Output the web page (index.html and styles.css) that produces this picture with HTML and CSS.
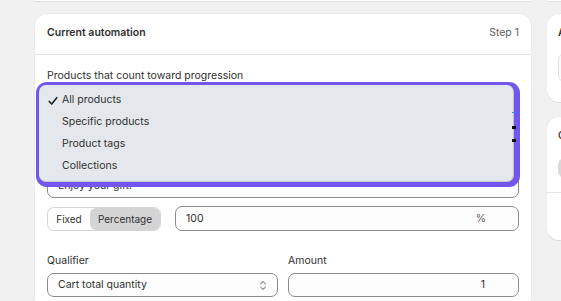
FILE: index.html
```html
<!DOCTYPE html>
<html lang="en">
  <head>
    <meta charset="UTF-8" />
    <meta name="viewport" content="width=device-width, initial-scale=1.0" />
    <title>Automation settings</title>
    <link rel="stylesheet" href="styles.css">
  </head>

  <body>
    <div class="page">
      <main class="col main-col">
        <div class="card stub"></div>

        <section class="card automation">
          <header class="card-head">
            <h2>Current automation</h2>
            <span class="step">Step 1</span>
          </header>

          <div class="card-body">
            <div class="field">
              <label>Products that count toward progression</label>
              <div class="control select"></div>
            </div>

            <div class="field gift">
              <div class="control">Enjoy your gift!</div>
            </div>

            <div class="row">
              <div class="segmented">
                <span class="seg-fixed">Fixed</span>
                <span class="seg-pct on">Percentage</span>
              </div>
              <div class="control grow">
                <span>100</span>
                <span class="suffix">%</span>
              </div>
            </div>

            <div class="grid2">
              <div class="field">
                <label>Qualifier</label>
                <div class="control select">
                  <span>Cart total quantity</span>
                  <svg class="updown" viewBox="0 0 10 14" width="8" height="11">
                    <path d="M2 5l3-3 3 3M2 9l3 3 3-3" fill="none" stroke="currentColor" stroke-width="1.3" stroke-linecap="round" stroke-linejoin="round" />
                  </svg>
                </div>
              </div>
              <div class="field">
                <label>Amount</label>
                <div class="control number">1</div>
              </div>
            </div>
          </div>

          <!-- open native picker, highlighted -->
          <div class="menu-ring">
            <ul class="menu">
              <li class="picked">
                <svg class="check" viewBox="0 0 12 12" width="10" height="10">
                  <path d="M1.5 6.5l3 3.2L10.5 2" fill="none" stroke="currentColor" stroke-width="1.8" stroke-linecap="round" stroke-linejoin="round" />
                </svg>
                All products
              </li>
              <li>Specific products</li>
              <li>Product tags</li>
              <li>Collections</li>
            </ul>
            <i class="tick blue"></i>
            <i class="tick dark one"></i>
            <i class="tick dark two"></i>
          </div>
        </section>
      </main>

      <aside class="col side-col">
        <div class="card stub"></div>

        <section class="card side-one">
          <h2>A</h2>
          <div class="preview-box"></div>
        </section>

        <section class="card side-two">
          <div class="side-inner">
            <h2>C</h2>
            <span class="grey-btn"></span>
          </div>
        </section>
      </aside>
    </div>
  </body>
</html>
```

FILE: styles.css
```css
* {
  margin: 0;
  padding: 0;
  box-sizing: border-box;
  font-family: Inter, "Liberation Sans", sans-serif;
}

body {
  background: #f1f1f1;
  color: #303030;
  font-size: 10.5px;
  line-height: 14px;
  overflow: hidden;
}

.page {
  display: flex;
  gap: 16px;
  padding-left: 35px;
}

.col {
  display: flex;
  flex-direction: column;
  flex-shrink: 0;
}

.main-col {
  width: 496px;
  gap: 13px;
}

.side-col {
  width: 14px;
  gap: 13px;
  overflow: hidden;
}

.card {
  background: #fff;
  border-radius: 12px;
  box-shadow: 0 1px 0 #dedede, 0 0 0 1px #ebebeb;
}

.side-col .card {
  width: 220px;
}

.stub {
  height: 1px;
  border-radius: 0 0 12px 12px;
}

.automation {
  position: relative;
}

.card-head {
  height: 41px;
  padding: 0 12px 2px;
  display: flex;
  justify-content: space-between;
  align-items: center;
  border-bottom: 1px solid #e6e6e6;
}

h2 {
  font-size: 10.5px;
  font-weight: 600;
  color: #303030;
}

.step {
  color: #616161;
}

.card-body {
  padding: 14px 12px 14px;
  display: flex;
  flex-direction: column;
}

.field {
  display: flex;
  flex-direction: column;
}

.field label {
  margin-bottom: 4px;
}

.gift {
  margin-top: 62px;
}

.control {
  height: 25px;
  border: 1px solid #8a8a8a;
  border-radius: 7px;
  padding: 0 10px;
  display: flex;
  align-items: center;
  justify-content: space-between;
  background: #fdfdfd;
}

.select {
  height: 24px;
  padding-right: 10px;
}

.updown {
  color: #8a8a8a;
}

.row {
  margin-top: 8px;
  display: flex;
  align-items: center;
  gap: 14px;
}

.grow {
  flex: 1;
  padding-right: 32px;
}

.suffix {
  color: #616161;
}

.segmented {
  display: flex;
  height: 24px;
  border: 1px solid #d4d4d4;
  border-radius: 7px;
  overflow: hidden;
  font-size: 10px;
}

.segmented span {
  display: flex;
  align-items: center;
  justify-content: center;
}

.seg-fixed {
  width: 42px;
}

.seg-pct {
  width: 70px;
}

.segmented .on {
  background: #d4d4d4;
  border-radius: 6px 0 0 6px;
}

.grid2 {
  margin-top: 23px;
  display: grid;
  grid-template-columns: 1fr 1fr;
  gap: 10px;
}

.grid2 label {
  margin-bottom: 5px;
}

.number {
  height: 24px;
  justify-content: flex-end;
  padding-right: 33px;
}

.menu-ring {
  position: absolute;
  left: 1px;
  top: 68px;
  width: 484px;
  height: 105px;
  background: #7356ee;
  border-radius: 11px;
  padding: 3px 6px 5px 3px;
}

.menu {
  list-style: none;
  height: 100%;
  background: #e4e7eb;
  border: 1px solid #c3c5c8;
  border-left: none;
  border-top: none;
  border-radius: 7px;
  padding: 4px 0 4px 23px;
}

.menu li {
  height: 22px;
  display: flex;
  align-items: center;
  position: relative;
}

.check {
  position: absolute;
  left: -14px;
  top: 7px;
  color: #1f1f1f;
}

.tick {
  position: absolute;
  left: 476px;
  width: 4px;
}

.blue {
  top: 30px;
  height: 1px;
  background: #3b82f6;
}

.dark {
  height: 3px;
  background: #111;
}

.dark.one {
  top: 44px;
}

.dark.two {
  top: 57px;
}

.side-one {
  height: 88px;
  padding: 12px 11px;
}

.preview-box {
  margin-top: 12px;
  height: 31px;
  border: 1px solid #e3e3e3;
  border-radius: 8px;
  background: #fafafa;
}

.side-two {
  height: 123px;
  margin-top: 2px;
}

.side-inner {
  padding: 12px 11px 14px;
  border-bottom: 1px solid #e6e6e6;
}

.side-inner h2 {
  font-weight: 500;
}

.grey-btn {
  display: block;
  margin-top: 15px;
  width: 40px;
  height: 20px;
  background: #d9d9d9;
  border-radius: 7px;
}
```
